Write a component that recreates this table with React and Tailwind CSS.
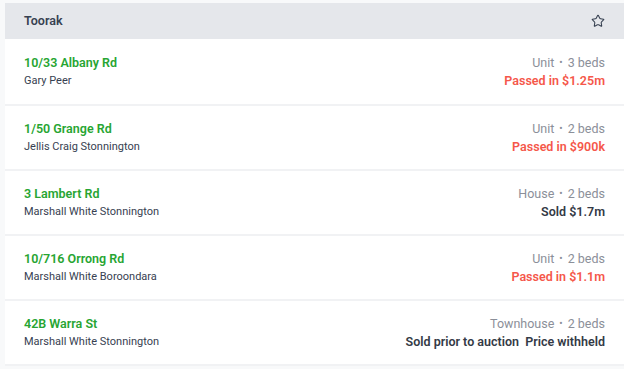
import { Star } from 'lucide-react';

const listings = [
  {
    address: '10/33 Albany Rd',
    agent: 'Gary Peer',
    type: 'Unit',
    beds: 3,
    result: 'Passed in $1.25m',
    passed: true,
  },
  {
    address: '1/50 Grange Rd',
    agent: 'Jellis Craig Stonnington',
    type: 'Unit',
    beds: 2,
    result: 'Passed in $900k',
    passed: true,
  },
  {
    address: '3 Lambert Rd',
    agent: 'Marshall White Stonnington',
    type: 'House',
    beds: 2,
    result: 'Sold $1.7m',
    passed: false,
  },
  {
    address: '10/716 Orrong Rd',
    agent: 'Marshall White Boroondara',
    type: 'Unit',
    beds: 2,
    result: 'Passed in $1.1m',
    passed: true,
  },
  {
    address: '42B Warra St',
    agent: 'Marshall White Stonnington',
    type: 'Townhouse',
    beds: 2,
    result: 'Sold prior to auction\u00a0\u00a0Price withheld',
    passed: false,
  },
];

const ListingRow = ({ listing, first }) => (
  <div
    className={`flex items-center justify-between px-[19px] h-[65px] ${
      first ? '' : 'border-t-2 border-[#f1f2f4]'
    }`}
  >
    <div className="flex flex-col leading-[18px]">
      <span className="text-[12.5px] font-semibold text-[#27a532]">
        {listing.address}
      </span>
      <span className="text-[11px] text-[#374151]">{listing.agent}</span>
    </div>
    <div className="flex flex-col items-end leading-[18px]">
      <span className="flex items-center text-[12.5px] text-[#8b8f99]">
        {listing.type}
        <span className="mx-[5px] text-[10px]">•</span>
        {listing.beds} beds
      </span>
      <span
        className={`text-[12.5px] font-semibold ${
          listing.passed ? 'text-[#f5574a]' : 'text-[#343a46]'
        }`}
      >
        {listing.result}
      </span>
    </div>
  </div>
);

export default function App() {
  return (
    <div
      className="min-h-[369px] w-full overflow-hidden bg-[#f8f9fa] pl-[5px] pt-[3px]"
      style={{ fontFamily: 'Roboto, "Noto Sans", sans-serif' }}
    >
      <div className="bg-white border-b-2 border-[#f1f2f4]">
        <div className="flex items-center justify-between h-[36px] px-[19px] bg-[#e5e7eb]">
          <span className="text-[12.5px] font-semibold text-[#374151]">Toorak</span>
          <Star size={14} strokeWidth={1.8} className="text-[#374151]" />
        </div>
        {listings.map((l, i) => (
          <ListingRow key={l.address} listing={l} first={i === 0} />
        ))}
      </div>
    </div>
  );
}
